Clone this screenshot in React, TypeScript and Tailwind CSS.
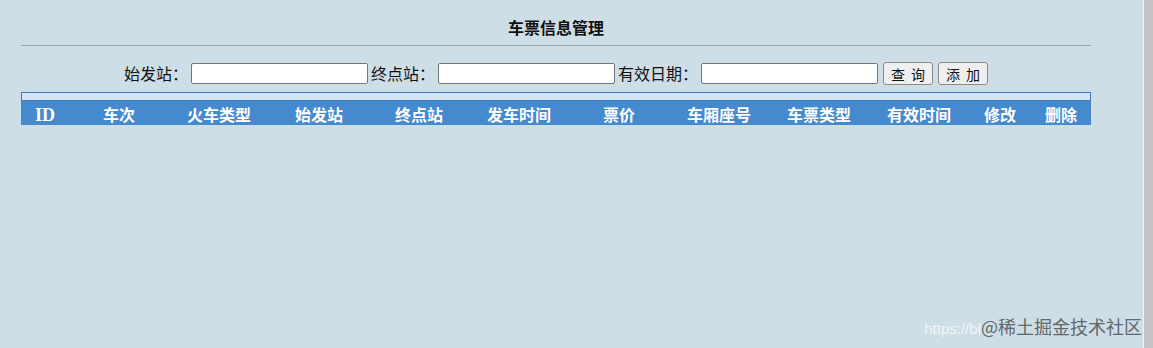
import React from "react";

const cols: { label: string; w: string }[] = [
  { label: "ID", w: "w-[48px]" },
  { label: "车次", w: "w-[100px]" },
  { label: "火车类型", w: "w-[100px]" },
  { label: "始发站", w: "w-[100px]" },
  { label: "终点站", w: "w-[100px]" },
  { label: "发车时间", w: "w-[100px]" },
  { label: "票价", w: "w-[100px]" },
  { label: "车厢座号", w: "w-[100px]" },
  { label: "车票类型", w: "w-[100px]" },
  { label: "有效时间", w: "w-[100px]" },
  { label: "修改", w: "w-[62px]" },
  { label: "删除", w: "w-[60px]" },
];

function Field({ label }: { label: string }) {
  return (
    <>
      <span className="text-[16px] leading-[23px] text-[#111]">{label}</span>
      <input
        type="text"
        className="mx-[3px] h-[21px] w-[177px] border border-[#767676] bg-white rounded-[2px] outline-none"
      />
    </>
  );
}

export default function App() {
  return (
    <div className="flex h-[348px] w-[1153px] bg-[#cedee6] font-['Noto_Sans_CJK_SC',sans-serif]">
      <div className="relative flex-1">
        <div className="ml-[21px] w-[1070px] pt-[16px]">
          <h1 className="text-center text-[16px] font-bold leading-[22px] text-[#111]">车票信息管理</h1>
          <div className="mt-[7px] h-px bg-[#9aa5ab]" />
          <div className="mt-[16px] flex h-[23px] items-center justify-center">
            <Field label="始发站：" />
            <Field label="终点站：" />
            <Field label="有效日期：" />
            <button className="ml-[2px] h-[23px] w-[50px] rounded-[3px] border border-[#8a8a8a] bg-[#efefef] text-[14px] leading-none tracking-[6px] pl-[6px] text-[#111]">
              查询
            </button>
            <button className="ml-[5px] h-[23px] w-[50px] rounded-[3px] border border-[#8a8a8a] bg-[#efefef] text-[14px] leading-none tracking-[6px] pl-[6px] text-[#111]">
              添加
            </button>
          </div>
          <div className="mt-[7px] h-[9px] border border-[#3a78c0] bg-[#d5e5f2]" />
          <div className="flex h-[24px] items-baseline bg-[#4589cf] pt-[3px]">
            {cols.map((c, i) => (
              <div
                key={c.label}
                className={`${c.w} text-center font-bold leading-[20px] text-white ${
                  i === 0 ? "text-[18px] font-['Liberation_Serif',serif]" : "text-[16px]"
                }`}
              >
                {c.label}
              </div>
            ))}
          </div>
        </div>
        <div className="absolute bottom-[8px] right-[1px] flex items-baseline">
          <span className="text-[15px] text-white/70 font-['Liberation_Sans',sans-serif]">https://bl</span>
          <span className="text-[18px] text-[#62676b]">@稀土掘金技术社区</span>
        </div>
      </div>
      <div className="w-px bg-[#eef3f5]" />
      <div className="w-[9px] bg-[#c3c3c3]" />
    </div>
  );
}
